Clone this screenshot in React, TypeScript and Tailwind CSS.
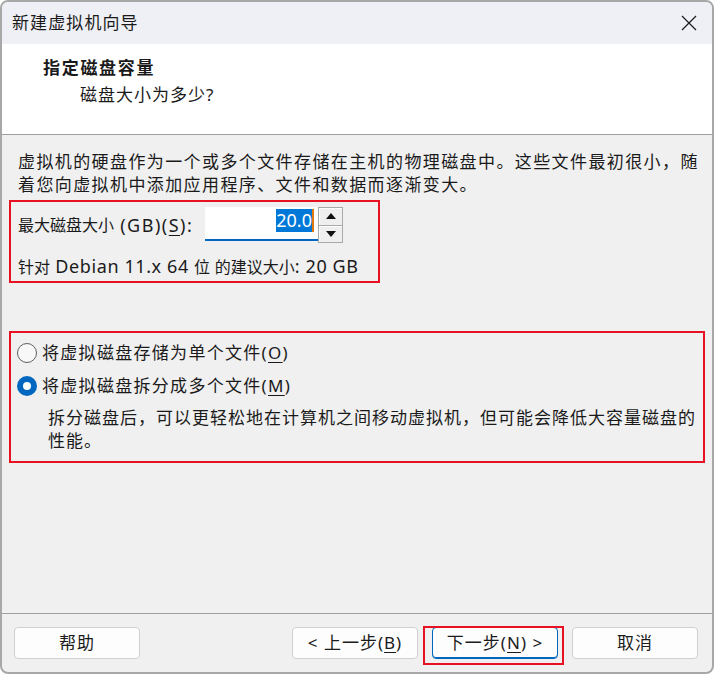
import React from "react";

function U({ children }: { children: React.ReactNode }) {
  return <span className="underline underline-offset-[3px] decoration-1">{children}</span>;
}

function Btn({ children, primary }: { children: React.ReactNode; primary?: boolean }) {
  return (
    <div
      className={
        "w-[126px] h-[32px] rounded-[4px] bg-[#fdfdfd] flex items-center justify-center text-[17px] tracking-[1px] text-[#1b1b1b] " +
        (primary
          ? "border border-[#0067c0] shadow-[inset_0_-1px_0_#0067c0]"
          : "border border-[#d0d0d0]")
      }
    >
      {children}
    </div>
  );
}

export default function App() {
  return (
    <div className="w-[714px] h-[674px] bg-white font-['Noto_Sans','Noto_Sans_CJK_SC',sans-serif] text-[#1a1a1a]">
      <div className="w-full h-full rounded-[8px] border-2 border-[#a8a8a8] overflow-hidden flex flex-col bg-[#f0f0f0]">
        {/* Title bar */}
        <div className="h-[42px] shrink-0 bg-[#eff0f5] flex items-center justify-between pl-[10px] pr-[15px]">
          <span className="text-[17px] tracking-[1.1px] leading-[24px]">新建虚拟机向导</span>
          <svg width="16" height="16" viewBox="0 0 16 16" className="text-[#1a1a1a]">
            <path d="M1 1 L15 15 M15 1 L1 15" stroke="currentColor" strokeWidth="1.2" fill="none" />
          </svg>
        </div>

        {/* Header */}
        <div className="h-[90px] shrink-0 bg-white pl-[41px] pt-[12px]">
          <div className="text-[17px] font-bold tracking-[1.7px] leading-[24px]">指定磁盘容量</div>
          <div className="ml-[37px] mt-[3px] text-[17px] tracking-[1px] leading-[24px]">磁盘大小为多少?</div>
        </div>
        <div className="h-px shrink-0 bg-[#a0a0a0]" />

        {/* Content */}
        <div className="flex-1 flex flex-col">
          <div className="pl-[16px] pt-[15px] text-[17px] tracking-[1.4px] leading-[23px] whitespace-nowrap">
            <div>虚拟机的硬盘作为一个或多个文件存储在主机的物理磁盘中。这些文件最初很小，随</div>
            <div>着您向虚拟机中添加应用程序、文件和数据而逐渐变大。</div>
          </div>

          {/* Box 1 */}
          <div className="mt-[4px] ml-[7px] w-[371px] h-[83px] border-2 border-[#e81123] pl-[7px] pt-[5px]">
            <div className="flex items-start h-[36px]">
              <div className="w-[187px] h-[36px] flex items-center text-[16px] leading-[24px] whitespace-nowrap">
                最大磁盘大小
                <span className="text-[18px] tracking-[1.5px]">
                  &nbsp;(GB)(<U>S</U>):
                </span>
              </div>
              <div className="w-[113px] h-[34px] bg-white border-b-2 border-[#0067c0] flex items-start justify-end pt-[2px] pr-[4px]">
                <span className="bg-[#0078d7] text-white text-[18px] leading-[23px]">20.0</span>
                <span className="w-[2px] h-[23px] bg-[#e07a10]" />
              </div>
              <div className="w-[25px] h-[36px] flex flex-col">
                <div className="flex-1 border border-[#a9a9a9] bg-[#efefef] shadow-[inset_1px_1px_0_#fff] flex items-center justify-center">
                  <svg width="10" height="6" viewBox="0 0 10 6">
                    <path d="M0 6 L5 0 L10 6 Z" fill="#111" />
                  </svg>
                </div>
                <div className="flex-1 border border-t-0 border-[#a9a9a9] bg-[#efefef] shadow-[inset_1px_1px_0_#fff] flex items-center justify-center">
                  <svg width="10" height="6" viewBox="0 0 10 6">
                    <path d="M0 0 L10 0 L5 6 Z" fill="#111" />
                  </svg>
                </div>
              </div>
            </div>
            <div className="mt-[11px] text-[16px] leading-[24px] whitespace-nowrap">
              针对
              <span className="text-[18px] tracking-[0.6px]">&nbsp;Debian 11.x 64&nbsp;</span>位
              <span className="text-[18px]">&nbsp;</span>的建议大小
              <span className="text-[18px] tracking-[0.6px]">: 20 GB</span>
            </div>
          </div>

          {/* Box 2 */}
          <div className="mt-[48px] ml-[7px] w-[696px] h-[132px] border-2 border-[#e81123] pl-[6px] pt-[7px]">
            <div className="flex items-center h-[26px]">
              <div className="w-[20px] h-[20px] rounded-full border border-[#5f5f5f] bg-[#f8f8f8]" />
              <span className="ml-[5px] text-[17px] tracking-[1.3px] leading-[24px] whitespace-nowrap">
                将虚拟磁盘存储为单个文件(<U>O</U>)
              </span>
            </div>
            <div className="flex items-center h-[26px] mt-[7px]">
              <div className="w-[20px] h-[20px] rounded-full bg-[#0067c0] flex items-center justify-center">
                <div className="w-[8px] h-[8px] rounded-full bg-white" />
              </div>
              <span className="ml-[5px] text-[17px] tracking-[1.3px] leading-[24px] whitespace-nowrap">
                将虚拟磁盘拆分成多个文件(<U>M</U>)
              </span>
            </div>
            <div className="ml-[31px] mt-[7px] text-[17px] tracking-[1px] leading-[23px] whitespace-nowrap">
              <div>拆分磁盘后，可以更轻松地在计算机之间移动虚拟机，但可能会降低大容量磁盘的</div>
              <div>性能。</div>
            </div>
          </div>
        </div>

        <div className="h-px shrink-0 bg-[#a0a0a0]" />
        {/* Buttons */}
        <div className="h-[58px] shrink-0 pt-[13px] pl-[12px] pr-[14px] flex items-start justify-between">
          <Btn>帮助</Btn>
          <div className="flex gap-[14px]">
            <Btn>
              &lt; 上一步(<U>B</U>)
            </Btn>
            <div className="relative">
              <Btn primary>
                下一步(<U>N</U>) &gt;
              </Btn>
              <div className="absolute left-[-9px] top-[-1px] w-[141px] h-[39px] border-2 border-[#e81123] pointer-events-none" />
            </div>
            <Btn>取消</Btn>
          </div>
        </div>
      </div>
    </div>
  );
}
